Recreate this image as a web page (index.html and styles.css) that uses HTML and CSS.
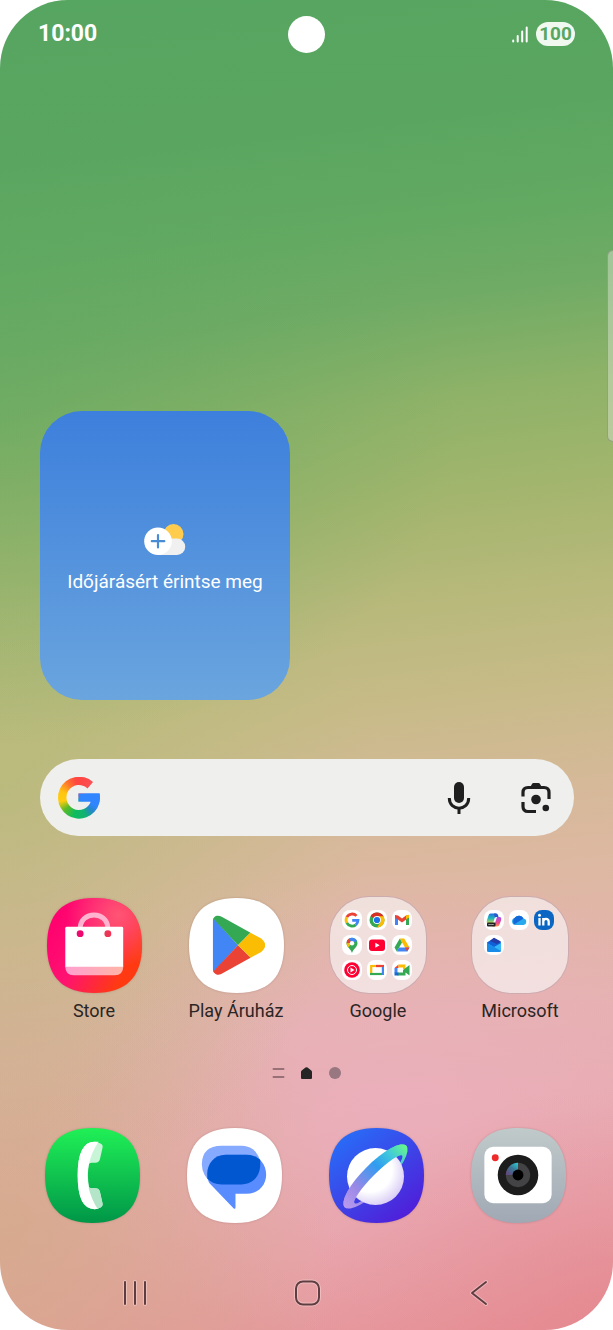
FILE: index.html
```html
<!DOCTYPE html>
<html lang="hu">
<head>
    <meta charset="UTF-8">
    <meta name="viewport" content="width=device-width, initial-scale=1">
    <title>Kezdőképernyő</title>
    <link rel="stylesheet" href="styles.css">
</head>
<body>
<div class="phone">
    <header class="statusbar">
        <time class="clock">10:00</time>
        <div class="camera-hole"></div>
        <div class="status-icons">
            <svg class="signal" viewBox="0 0 16 17">
                <path d="M1.2 14.5v1M5.7 10v5.5M10.2 5.5v10M14.7 1.5v14"/>
            </svg>
            <span class="battery">100</span>
        </div>
    </header>

    <div class="edge-handle"></div>

    <main class="home">
        <button class="weather" type="button">
            <svg class="weather-icon" viewBox="0 0 42 33">
                <circle cx="29.5" cy="11" r="10" fill="#ffcc4d"/>
                <path d="M14 15.5H33A8.2 8.2 0 0 1 33 32H14Z" fill="#f0f0f0"/>
                <circle cx="14" cy="18.2" r="13.8" fill="#fff"/>
                <path d="M14 12v12.500M7.800 18.200h12.500" stroke="#4a8bd6" stroke-width="2.200" stroke-linecap="round"/>
            </svg>
            <span>Időjárásért érintse meg</span>
        </button>

        <div class="search">
            <div class="google-logo"></div>
            <input class="search-input" type="text" aria-label="Google">
            <button class="search-btn" type="button" aria-label="Mic">
                <svg viewBox="0 0 34 34">
                    <rect x="12" y="1" width="10" height="21" rx="5" fill="#1f1f1f"/>
                    <path d="M7.300 17C7.300 30.500 26.700 30.500 26.700 17M17 27v6" fill="none" stroke="#1f1f1f" stroke-width="3"/>
                </svg>
            </button>
            <button class="search-btn" type="button" aria-label="Lens">
                <svg viewBox="0 0 34 34">
                    <path d="M4 15.500V11.500Q4 6.500 9 6.500H25Q30 6.500 30 11.500V18M4 21V25.500Q4 30.500 9 30.500H17" fill="none" stroke="#1f1f1f" stroke-width="3.200"/>
                    <path d="M11 6.500L13 3Q13.500 2 14.500 2H19.500Q20.500 2 21 3L23 6.500Z" fill="#1f1f1f"/>
                    <circle cx="17" cy="18.500" r="4.800" fill="#1f1f1f"/>
                    <circle cx="26.800" cy="27" r="3.300" fill="#1f1f1f"/>
                </svg>
            </button>
        </div>

        <nav class="apps">
            <a class="app" href="#">
                <span class="app-icon">
                    <svg viewBox="0 0 96 96">
                        <defs>
                            <linearGradient id="storebg" x1="0" y1=".25" x2="1" y2=".8">
                                <stop offset="0" stop-color="#ff006f"/>
                                <stop offset=".4" stop-color="#ff1271"/>
                                <stop offset=".85" stop-color="#ff3a12"/>
                            </linearGradient>
                            <radialGradient id="storeglow" cx=".75" cy=".18" r=".55">
                                <stop offset="0" stop-color="#ff5575"/>
                                <stop offset="1" stop-color="#ff5078" stop-opacity="0"/>
                            </radialGradient>
                            <linearGradient id="bagband" x1="0" y1="0" x2="1" y2="0">
                                <stop offset="0" stop-color="#ffa0d0"/>
                                <stop offset="1" stop-color="#ffb4a6"/>
                            </linearGradient>
                        </defs>
                        <path d="M48 0C80 0 96 16 96 48S80 96 48 96 0 80 0 48 16 0 48 0Z" fill="url(#storebg)"/>
                        <path d="M48 0C80 0 96 16 96 48S80 96 48 96 0 80 0 48 16 0 48 0Z" fill="url(#storeglow)"/>
                        <path d="M33.500 34V31C33.500 12.500 61.500 12.500 61.500 31V34" fill="none" stroke="#ffb3cf" stroke-width="5"/>
                        <path d="M20 29H75.500Q77 29 77 30.500V70H18.500V30.500Q18.500 29 20 29Z" fill="#fff"/>
                        <path d="M18.500 69.500H77Q77 78 68.500 78H27Q18.500 78 18.500 69.500Z" fill="url(#bagband)"/>
                        <circle cx="33.500" cy="36" r="3.500" fill="#ed0a70"/>
                        <circle cx="61.500" cy="36" r="3.500" fill="#ed3556"/>
                    </svg>
                </span>
                <span class="app-name">Store</span>
            </a>
            <a class="app" href="#">
                <span class="app-icon">
                    <svg viewBox="0 0 96 96">
                        <defs>
                            <clipPath id="playshape">
                                <path d="M24 24C24 18 29 16.500 33 19L73 41Q81 47.700 73 54.500L33 76.500C29 79 24 77 24 71Z"/>
                            </clipPath>
                        </defs>
                        <path d="M48 0C80 0 96 16 96 48S80 96 48 96 0 80 0 48 16 0 48 0Z" fill="#fff"/>
                        <g clip-path="url(#playshape)">
                            <path d="M20 15V80L49.500 47.700Z" fill="#4285f4"/>
                            <path d="M20 16L49.500 47.700L65 32L35 10Z" fill="#34a853"/>
                            <path d="M20 79L49.500 47.700L65 63L35 85Z" fill="#ea4335"/>
                            <path d="M49.500 47.700L65 32L85 47L65 63Z" fill="#fbbc04"/>
                        </g>
                    </svg>
                </span>
                <span class="app-name">Play Áruház</span>
            </a>
            <a class="app" href="#">
                <span class="app-icon folder">
                    <span class="mini"><svg viewBox="0 0 20 20">
                        <g fill="none" stroke-width="2.800">
                            <path d="M14.500 5.900A6 6 0 0 0 4.800 7.200" stroke="#ea4335"/>
                            <path d="M4.800 7.200A6 6 0 0 0 4.800 12.900" stroke="#fbbc04"/>
                            <path d="M4.800 12.900A6 6 0 0 0 13.800 14.800" stroke="#34a853"/>
                            <path d="M13.800 14.800A6 6 0 0 0 16 10.300H10.200" stroke="#4285f4"/>
                        </g>
                    </svg></span>
                    <span class="mini"><svg viewBox="0 0 20 20">
                        <circle cx="10" cy="10" r="7.500" fill="#34a853"/>
                        <path d="M10 10L3.500 6.250A7.500 7.500 0 0 1 16.500 6.250Z" fill="#d93025"/>
                        <path d="M10 6.250H16.500A7.500 7.500 0 0 1 10 17.500L13.500 12Z" fill="#fbbc04"/>
                        <circle cx="10" cy="10" r="3.900" fill="#fff"/>
                        <circle cx="10" cy="10" r="3.100" fill="#1a73e8"/>
                    </svg></span>
                    <span class="mini"><svg viewBox="0 0 20 20">
                        <path d="M3 5.500V15H6V8Z" fill="#4285f4"/>
                        <path d="M17 5.500V15H14V8Z" fill="#34a853"/>
                        <path d="M3 5L6 5.500L10 8.600L14 5.500L17 5V7.500L10 12.500L3 7.500Z" fill="#ea4335"/>
                        <path d="M14 5.500L17 4.800V7.500L14 9.600Z" fill="#fbbc04"/>
                    </svg></span>
                    <span class="mini"><svg viewBox="0 0 20 20">
                        <path d="M10 18C9 14 4.500 12 4.500 8.200A5.500 5.500 0 0 1 15.500 8.200C15.500 12 11 14 10 18Z" fill="#34a853"/>
                        <path d="M4.500 8.200A5.500 5.500 0 0 1 7 3.600L10 8Z" fill="#ea4335"/>
                        <path d="M7 3.600A5.500 5.500 0 0 1 15 6L10 8Z" fill="#4285f4"/>
                        <path d="M4.500 8.200Q4.500 10.500 6.500 12.300L10 8Z" fill="#fbbc04"/>
                        <circle cx="10" cy="8.200" r="2.200" fill="#fff"/>
                    </svg></span>
                    <span class="mini"><svg viewBox="0 0 20 20">
                        <rect x="2" y="4.500" width="16" height="11.500" rx="3" fill="#ff0033"/>
                        <path d="M8.300 7.700V12.800L12.700 10.200Z" fill="#fff"/>
                    </svg></span>
                    <span class="mini"><svg viewBox="0 0 20 20">
                        <path d="M7.800 3.500H12.200L17.500 12.500H13Z" fill="#fbbc04"/>
                        <path d="M7.800 3.500L10 7.400L4.800 16.500L2.500 12.500Z" fill="#34a853"/>
                        <path d="M7 12.500H17.500L15.200 16.500H4.800Z" fill="#4285f4"/>
                        <path d="M13 12.500H17.500L15.200 16.500Z" fill="#ea4335"/>
                    </svg></span>
                    <span class="mini"><svg viewBox="0 0 20 20">
                        <circle cx="10" cy="10" r="7.800" fill="#ff0033"/>
                        <circle cx="10" cy="10" r="4.500" fill="none" stroke="#fff" stroke-width="1"/>
                        <path d="M8.500 7.600V12.400L12.500 10Z" fill="#fff"/>
                    </svg></span>
                    <span class="mini"><svg viewBox="0 0 20 20">
                        <path d="M4.500 6H14" stroke="#fbbc04" stroke-width="2.200"/>
                        <path d="M4.200 5V14" stroke="#fbbc04" stroke-width="2.200"/>
                        <path d="M9 6H17" stroke="#ea4335" stroke-width="2.200"/>
                        <path d="M15.900 7V15" stroke="#4285f4" stroke-width="2.200"/>
                        <path d="M3 14H15" stroke="#34a853" stroke-width="2.200"/>
                    </svg></span>
                    <span class="mini"><svg viewBox="0 0 20 20">
                        <path d="M2.500 8L6.500 4.500V8Z" fill="#ea4335"/>
                        <path d="M2.500 8H5.500V13H2.500Z" fill="#4285f4"/>
                        <path d="M6.500 4.500H13.500V10L11 9V7.500H6.500Z" fill="#fbbc04"/>
                        <path d="M5.500 12.500H11V10L17.500 5V15.500L13.500 12.500V15.500H5.500Z" fill="#34a853"/>
                        <path d="M2.500 12.500H6.500V15.500H2.500Z" fill="#1967d2"/>
                    </svg></span>
                </span>
                <span class="app-name">Google</span>
            </a>
            <a class="app" href="#">
                <span class="app-icon folder">
                    <span class="mini"><svg viewBox="0 0 20 20">
                        <defs>
                            <linearGradient id="copleft" x1="0" y1="0" x2="0" y2="1">
                                <stop offset="0" stop-color="#2070e0"/>
                                <stop offset=".5" stop-color="#25b8b8"/>
                                <stop offset="1" stop-color="#d8d83a"/>
                            </linearGradient>
                            <linearGradient id="copright" x1="0" y1="0" x2="0" y2="1">
                                <stop offset="0" stop-color="#a050e8"/>
                                <stop offset=".6" stop-color="#f04a90"/>
                                <stop offset="1" stop-color="#ff9850"/>
                            </linearGradient>
                        </defs>
                        <path d="M6.500 3.500H12L9 13.500H4.500Q2 13.500 3 10L4.500 5.500Q5 3.500 6.500 3.500Z" fill="url(#copleft)"/>
                        <path d="M13 7H15.500Q18 7 17 10.500L15.500 14.500Q15 16.500 13 16.500H8L11 13Z" fill="url(#copright)"/>
                        <path d="M10 3.500H12.500Q14 3.500 14.500 7H11.500L11 8.500Z" fill="#2859c8"/>
                        <rect x="3" y="12.500" width="8.500" height="4" rx="1" fill="#222"/>
                        <path d="M4.500 14.500H10" stroke="#ddd" stroke-dasharray="1.200 .700"/>
                    </svg></span>
                    <span class="mini"><svg viewBox="0 0 20 20">
                        <path d="M6.500 15A3.600 3.600 0 0 1 5.500 8A5.200 5.200 0 0 1 14.500 8.500A3.300 3.300 0 0 1 14.500 15Z" fill="#28a8ed"/>
                        <path d="M6 7.500A5.200 5.200 0 0 1 14.500 8.500L5 14.500Q3 10 6 7.500Z" fill="#1268d8"/>
                    </svg></span>
                    <span class="mini linkedin"><svg viewBox="0 0 20 20">
                        <circle cx="5.500" cy="5.200" r="1.500" fill="#fff"/>
                        <path d="M5.500 8V15.500M9.300 8V15.500M9.300 11.500Q9.500 8.800 12 8.800T14.700 11.500V15.500" fill="none" stroke="#fff" stroke-width="2.300"/>
                    </svg></span>
                    <span class="mini"><svg viewBox="0 0 20 20">
                        <path d="M3 7.500L10 3L17 7.500V14.500Q17 17 14.500 17H5.500Q3 17 3 14.500Z" fill="#1060d8"/>
                        <path d="M6 6L13 9L17 6.500L10 2.800Z" fill="#233ca8"/>
                        <path d="M3 8L10 12L17 8V14.500Q17 17 14.500 17H5.500Q3 17 3 14.500Z" fill="#35b8f8"/>
                        <path d="M3 8L17 16Q16 17 14.500 17H5.500Q3 17 3 14.500Z" fill="#188ce8"/>
                    </svg></span>
                </span>
                <span class="app-name">Microsoft</span>
            </a>
        </nav>

        <div class="pages">
            <svg viewBox="0 0 70 14">
                <path d="M1.500 3H11.500M1.500 11H11.500" stroke="#997078" stroke-width="2" stroke-linecap="round"/>
                <path d="M29 6Q29 5 30 4.300L33.500 1.500Q34.500 .800 35.500 1.500L39 4.300Q40 5 40 6V12Q40 13 39 13H30Q29 13 29 12Z" fill="#252525"/>
                <circle cx="63" cy="7" r="6" fill="#987780"/>
            </svg>
        </div>
    </main>

    <nav class="dock">
        <a class="app" href="#" aria-label="Telefon">
            <span class="app-icon">
                <svg viewBox="0 0 96 96">
                    <defs>
                        <linearGradient id="phonebg" x1="0" y1="0" x2="0" y2="1">
                            <stop offset="0" stop-color="#20f056"/>
                            <stop offset="1" stop-color="#009648"/>
                        </linearGradient>
                    </defs>
                    <path d="M48 0C80 0 96 16 96 48S80 96 48 96 0 80 0 48 16 0 48 0Z" fill="url(#phonebg)"/>
                    <path d="M50 14Q53 14 56.500 16Q59 17.500 58 20.500L55.500 31.500Q54.500 35 51 35H47Q44.500 35 44 37.500Q42.500 48 44 58.500Q44.500 61 47 61H51Q54.500 61 55.500 64.500L58 75.500Q59 78.500 56.500 80Q53 82 50 82Q33 82 33 48T50 14Z" fill="#c8f5d8"/>
                    <path d="M50 14H54Q47 25 44.500 36Q43 42 43 48T44.500 60Q47 71 54 81.500L50 82Q33 82 33 48T50 14Z" fill="#fff"/>
                    <path d="M44 60Q46 61 51 61Q54.500 61 55.500 64.500L58 75.500Q59 78.500 56.500 80L53 81.500Q47 72 44 60Z" fill="#b5e5c8"/>
                </svg>
            </span>
        </a>
        <a class="app" href="#" aria-label="Üzenetek">
            <span class="app-icon">
                <svg viewBox="0 0 96 96">
                    <path d="M48 0C80 0 96 16 96 48S80 96 48 96 0 80 0 48 16 0 48 0Z" fill="#fff"/>
                    <path d="M35 18H55Q69 18 74 33V57H26Q15 48 15 37Q15 18 35 18Z" fill="#85aaff"/>
                    <path d="M39 27H60C72 27 80 36 80 47S72 66.500 60 66.500H49V80Q49 82.500 47 81L23 56Q20.500 53 20.500 46C20.500 36 28 27 39 27Z" fill="#598cff"/>
                    <path d="M39 27H60Q68 27 74 32V37C74 49 66 57 55 57H35Q26 57 20.500 51V46C20.500 36 28 27 39 27Z" fill="#0057d0"/>
                </svg>
            </span>
        </a>
        <a class="app" href="#" aria-label="Internet">
            <span class="app-icon">
                <svg viewBox="0 0 96 96">
                    <defs>
                        <linearGradient id="netbg" x1=".1" y1=".1" x2=".8" y2="1">
                            <stop offset="0" stop-color="#286cf7"/>
                            <stop offset="1" stop-color="#511cd8"/>
                        </linearGradient>
                        <linearGradient id="ring" gradientUnits="userSpaceOnUse" x1="-43" y1="0" x2="43" y2="0">
                            <stop offset="0" stop-color="#b89aef"/>
                            <stop offset=".25" stop-color="#9a88e6"/>
                            <stop offset=".6" stop-color="#309cf0"/>
                            <stop offset=".8" stop-color="#40c8dc"/>
                            <stop offset="1" stop-color="#66f58c"/>
                        </linearGradient>
                        <radialGradient id="planet" cx=".4" cy=".38" r=".65">
                            <stop offset=".6" stop-color="#fff"/>
                            <stop offset="1" stop-color="#d9cdf5"/>
                        </radialGradient>
                        <clipPath id="ringfront"><rect x="-50" y="-20" width="100" height="22"/></clipPath>
                    </defs>
                    <path d="M48 0C80 0 96 16 96 48S80 96 48 96 0 80 0 48 16 0 48 0Z" fill="url(#netbg)"/>
                    <g transform="translate(47 49) rotate(-45)">
                        <path d="M-44 0A44 13 0 0 1 44 0A44 13 0 0 1 -44 0ZM-34 4A34 6 0 0 0 34 4A34 6 0 0 0 -34 4Z" fill="url(#ring)" fill-rule="evenodd"/>
                    </g>
                    <circle cx="47" cy="49" r="28.800" fill="url(#planet)"/>
                    <g transform="translate(47 49) rotate(-45)" clip-path="url(#ringfront)">
                        <path d="M-44 0A44 13 0 0 1 44 0A44 13 0 0 1 -44 0ZM-34 4A34 6 0 0 0 34 4A34 6 0 0 0 -34 4Z" fill="url(#ring)" fill-rule="evenodd"/>
                    </g>
                </svg>
            </span>
        </a>
        <a class="app" href="#" aria-label="Kamera">
            <span class="app-icon">
                <svg viewBox="0 0 96 96">
                    <defs>
                        <linearGradient id="cambg" x1="0" y1="0" x2="0" y2="1">
                            <stop offset="0" stop-color="#c0caca"/>
                            <stop offset="1" stop-color="#a0a8b4"/>
                        </linearGradient>
                        <linearGradient id="lens" x1=".9" y1="0" x2=".2" y2="1">
                            <stop offset="0" stop-color="#28c8d0"/>
                            <stop offset=".45" stop-color="#3a7a98"/>
                            <stop offset="1" stop-color="#62467c"/>
                        </linearGradient>
                    </defs>
                    <path d="M48 0C80 0 96 16 96 48S80 96 48 96 0 80 0 48 16 0 48 0Z" fill="url(#cambg)"/>
                    <rect x="13.500" y="19" width="68" height="57" rx="9" fill="#fff"/>
                    <circle cx="24.500" cy="30" r="3.500" fill="#ee2a2a"/>
                    <circle cx="47.500" cy="47.500" r="20.500" fill="#1c1c1c"/>
                    <circle cx="47.500" cy="47.500" r="12.300" fill="#434346"/>
                    <path d="M47.500 47.500V35.200A12.300 12.300 0 0 0 35.200 47.500Z" fill="url(#lens)"/>
                    <circle cx="47.500" cy="47.500" r="5.500" fill="#000"/>
                </svg>
            </span>
        </a>
    </nav>

    <footer class="navbar">
        <button class="nav-btn" type="button" aria-label="Legutóbbiak">
            <svg viewBox="0 0 30 30">
                <path class="halo" d="M5 4V26M15 4V26M25 4V26"/>
                <path d="M5 4V26M15 4V26M25 4V26"/>
            </svg>
        </button>
        <button class="nav-btn" type="button" aria-label="Kezdőlap">
            <svg viewBox="0 0 30 30">
                <rect class="halo" x="4" y="3.500" width="23" height="23" rx="7"/>
                <rect x="4" y="3.500" width="23" height="23" rx="7"/>
            </svg>
        </button>
        <button class="nav-btn" type="button" aria-label="Vissza">
            <svg viewBox="0 0 30 30">
                <path class="halo" d="M22 4L8 15L22 26"/>
                <path d="M22 4L8 15L22 26"/>
            </svg>
        </button>
    </footer>
</div>
</body>
</html>
```
FILE: styles.css
```css
*{
    box-sizing: border-box;
}

body{
    margin: 0;
    background: #fff;
    font-family: Roboto, "Liberation Sans", sans-serif;
}

button{
    border: 0;
    padding: 0;
    background: none;
    font-family: inherit;
    cursor: pointer;
}

svg{
    display: block;
}

.phone{
    position: relative;
    display: flex;
    flex-direction: column;
    min-height: 100vh;
    overflow: hidden;
    border-radius: 68px;
    background:
        radial-gradient(ellipse 75% 24% at 0% 32%, rgba(92,168,96,.5), rgba(92,168,96,0)),
        radial-gradient(ellipse 60% 30% at 0% 60%, rgba(172,186,112,.55), rgba(172,186,112,0)),
        radial-gradient(ellipse 55% 28% at 0% 92%, rgba(208,172,132,.75), rgba(208,172,132,0)),
        radial-gradient(ellipse 50% 18% at 100% 100%, rgba(229,125,135,.55), rgba(229,125,135,0)),
        radial-gradient(ellipse 60% 18% at 65% 83%, rgba(236,176,194,.6), rgba(236,176,194,0)),
        linear-gradient(173deg, #56a560 0%, #5aa660 12%, #62a962 19%, #70ab65 25%, #8eb268 32%, #a2b56d 39%, #b9b97c 47%, #c8bb89 54%, #d4b997 60%, #deb8a3 67%, #e5b2af 76%, #e8abb0 84%, #e7a0a5 92%, #e5969a 100%);
}

.statusbar{
    display: grid;
    grid-template-columns: 1fr auto 1fr;
    align-items: center;
    height: 68px;
    padding: 0 38px;
    color: #fff;
}

.clock{
    font-size: 23px;
    font-weight: 700;
    line-height: 26px;
}

.camera-hole{
    width: 37px;
    height: 37px;
    border-radius: 50%;
    background: #fff;
}

.status-icons{
    display: flex;
    justify-content: flex-end;
    align-items: center;
    gap: 8px;
}

.signal{
    width: 16px;
    height: 17px;
    fill: none;
    stroke: #fff;
    stroke-width: 2;
    stroke-linecap: round;
}

.battery{
    width: 39px;
    border-radius: 12px;
    background: #f0f8f0;
    color: #58a660;
    font-size: 19px;
    font-weight: 700;
    line-height: 24px;
    text-align: center;
}

/* lies over the wallpaper on the right edge */
.edge-handle{
    position: absolute;
    top: 250px;
    right: -6px;
    width: 12px;
    height: 192px;
    border: 1px solid rgba(140,150,130,.8);
    border-radius: 6px;
    background: rgba(215,225,205,.5);
}

.home{
    margin-top: auto;
}

.weather{
    display: flex;
    flex-direction: column;
    align-items: center;
    justify-content: center;
    gap: 12px;
    width: 250px;
    height: 289px;
    margin-left: 40px;
    padding-top: 8px;
    border-radius: 42px;
    background: linear-gradient(#3d7fdc, #6aa5de);
    color: #fff;
    font-size: 19px;
    line-height: 28px;
}

.weather-icon{
    width: 42px;
    height: 33px;
}

.search{
    display: flex;
    align-items: center;
    height: 77px;
    margin: 59px 39px 0 40px;
    padding: 0 18px;
    border-radius: 39px;
    background: #efefed;
}

.google-logo{
    width: 42px;
    height: 42px;
    /* the blue bar reaches past the centre of the cone */
    background:
        linear-gradient(#3186ff, #3186ff) 20px 16px / 22px 9px no-repeat,
        conic-gradient(#ff4641 0deg, #fa5058 50deg, #3186ff 60deg, #3186ff 115deg, #2588c8 135deg, #12b270 160deg, #0ebc5f 195deg, #58ba28 230deg, #ffcc10 260deg, #ffc510 290deg, #ff7030 325deg, #ff4641 350deg);
    clip-path: path("M35 5.500A21 21 0 1 0 41.600 17H20.500V25H32.800A12.500 12.500 0 1 1 29.500 11.900Z");
}

.search-input{
    flex: 1;
    min-width: 0;
    height: 48px;
    border: 0;
    outline: 0;
    background: transparent;
    font-size: 20px;
}

.search-btn{
    width: 34px;
    height: 34px;
    margin-right: 3px;
}

.search-btn + .search-btn{
    margin-left: 40px;
}

.apps,
.dock{
    display: grid;
    grid-template-columns: repeat(4, 1fr);
}

.apps{
    margin-top: 60px;
    padding: 0 22px 0 23px;
}

.dock{
    margin-top: 46px;
    padding: 0 24px 0 21px;
}

.app{
    display: flex;
    flex-direction: column;
    align-items: center;
    gap: 5px;
    color: #2b2525;
    text-decoration: none;
}

.app-icon{
    display: grid;
    place-items: center;
    width: 98px;
    height: 98px;
}

.app-icon > svg{
    width: 95px;
    height: 95px;
    filter: drop-shadow(0 0 1px rgba(90,50,50,.25));
}

.app-name{
    font-size: 18px;
    line-height: 24px;
}

.folder{
    grid-template-columns: repeat(3, 19px);
    grid-auto-rows: 19px;
    gap: 6px;
    place-content: start;
    padding: 13px 0 0 12px;
    border: 1px solid rgba(190,150,155,.7);
    border-radius: 40px;
    background: rgba(246,238,238,.75);
}

.mini{
    width: 20px;
    height: 20px;
    border-radius: 8px;
    background: #fff;
}

.linkedin{
    background: #0a66c2;
}

.pages{
    display: flex;
    justify-content: center;
    margin-top: 43px;
}

.pages svg{
    width: 70px;
    height: 14px;
}

.navbar{
    display: flex;
    justify-content: center;
    align-items: center;
    gap: 142px;
    height: 74px;
    margin-top: 32px;
}

.nav-btn{
    width: 30px;
    height: 30px;
}

.nav-btn svg{
    fill: none;
    stroke: #5e3e42;
    stroke-width: 2;
    stroke-linecap: round;
    stroke-linejoin: round;
}

.nav-btn .halo{
    stroke: rgba(255,225,225,.45);
    stroke-width: 4;
}
```
